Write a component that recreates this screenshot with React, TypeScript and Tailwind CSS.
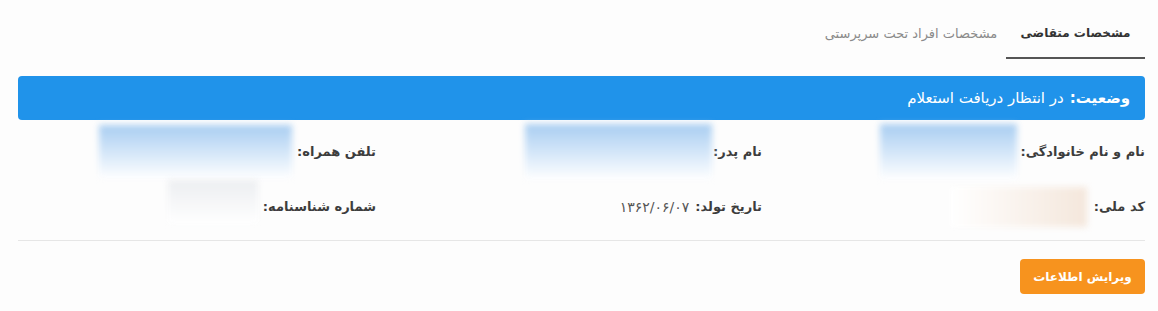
import React from "react";

const font = { fontFamily: '"DejaVu Sans", sans-serif' };

function Field({
  label,
  value,
  blur,
}: {
  label: string;
  value?: string;
  blur?: string;
}) {
  return (
    <div className="flex h-full items-center">
      <span className="text-[13px] font-semibold text-[#3d3d3d]">{label}</span>
      {value && <span className="mr-1.5 text-[14px] text-[#555]">{value}</span>}
      {blur && <div className={"shrink-0 blur-[3px] " + blur} />}
    </div>
  );
}

export default function App() {
  return (
    <div dir="rtl" className="h-[311px] w-[1158px] bg-[#fdfdfd]" style={font}>
      {/* tabs */}
      <div className="flex h-[59px] items-end pr-[13px]">
        <div className="flex h-[46px] w-[139px] items-center justify-center border-b-2 border-[#555] pb-1 text-[12px] font-semibold text-[#333]">
          مشخصات متقاضی
        </div>
        <div className="flex h-[46px] w-[190px] items-center justify-center pb-1 text-[13px] text-[#8a8a8a]">
          مشخصات افراد تحت سرپرستی
        </div>
      </div>

      <div className="mr-[13px] ml-[18px] mt-[17px]">
        {/* status bar */}
        <div className="flex h-[44px] items-center gap-1.5 rounded-[4px] bg-[#2093ea] pr-[15px] text-[15px] text-white">
          <span className="font-bold">وضعیت:</span>
          <span>در انتظار دریافت استعلام</span>
        </div>

        {/* details */}
        <div className="grid grid-cols-[383px_386px_1fr] grid-rows-[64px_46px]">
          <Field
            label="نام و نام خانوادگی:"
            blur="mr-[3px] h-[56px] w-[137px] bg-gradient-to-b from-[#a8cdf1] to-white"
          />
          <Field
            label="نام پدر:"
            blur="mr-[1px] h-[56px] w-[187px] bg-gradient-to-b from-[#a8cdf1] to-white"
          />
          <Field
            label="تلفن همراه:"
            blur="mr-[5px] h-[54px] w-[193px] bg-gradient-to-b from-[#a8cdf1] to-white"
          />
          <Field
            label="کد ملی:"
            blur="mr-[7px] h-[40px] w-[137px] bg-gradient-to-l from-[#f4e7dc] to-white"
          />
          <Field label="تاریخ تولد:" value="۱۳۶۲/۰۶/۰۷" />
          <Field
            label="شماره شناسنامه:"
            blur="mr-[5px] -mt-[10px] h-[44px] w-[90px] bg-gradient-to-b from-[#eceef1] to-white"
          />
        </div>

        <div className="mt-[10px] border-t border-[#e6e6e6]" />

        <div className="mt-[18px] flex">
          <button className="h-[35px] w-[125px] rounded-[4px] bg-[#f7931e] text-[12px] font-semibold text-white">
            ویرایش اطلاعات
          </button>
        </div>
      </div>
    </div>
  );
}
